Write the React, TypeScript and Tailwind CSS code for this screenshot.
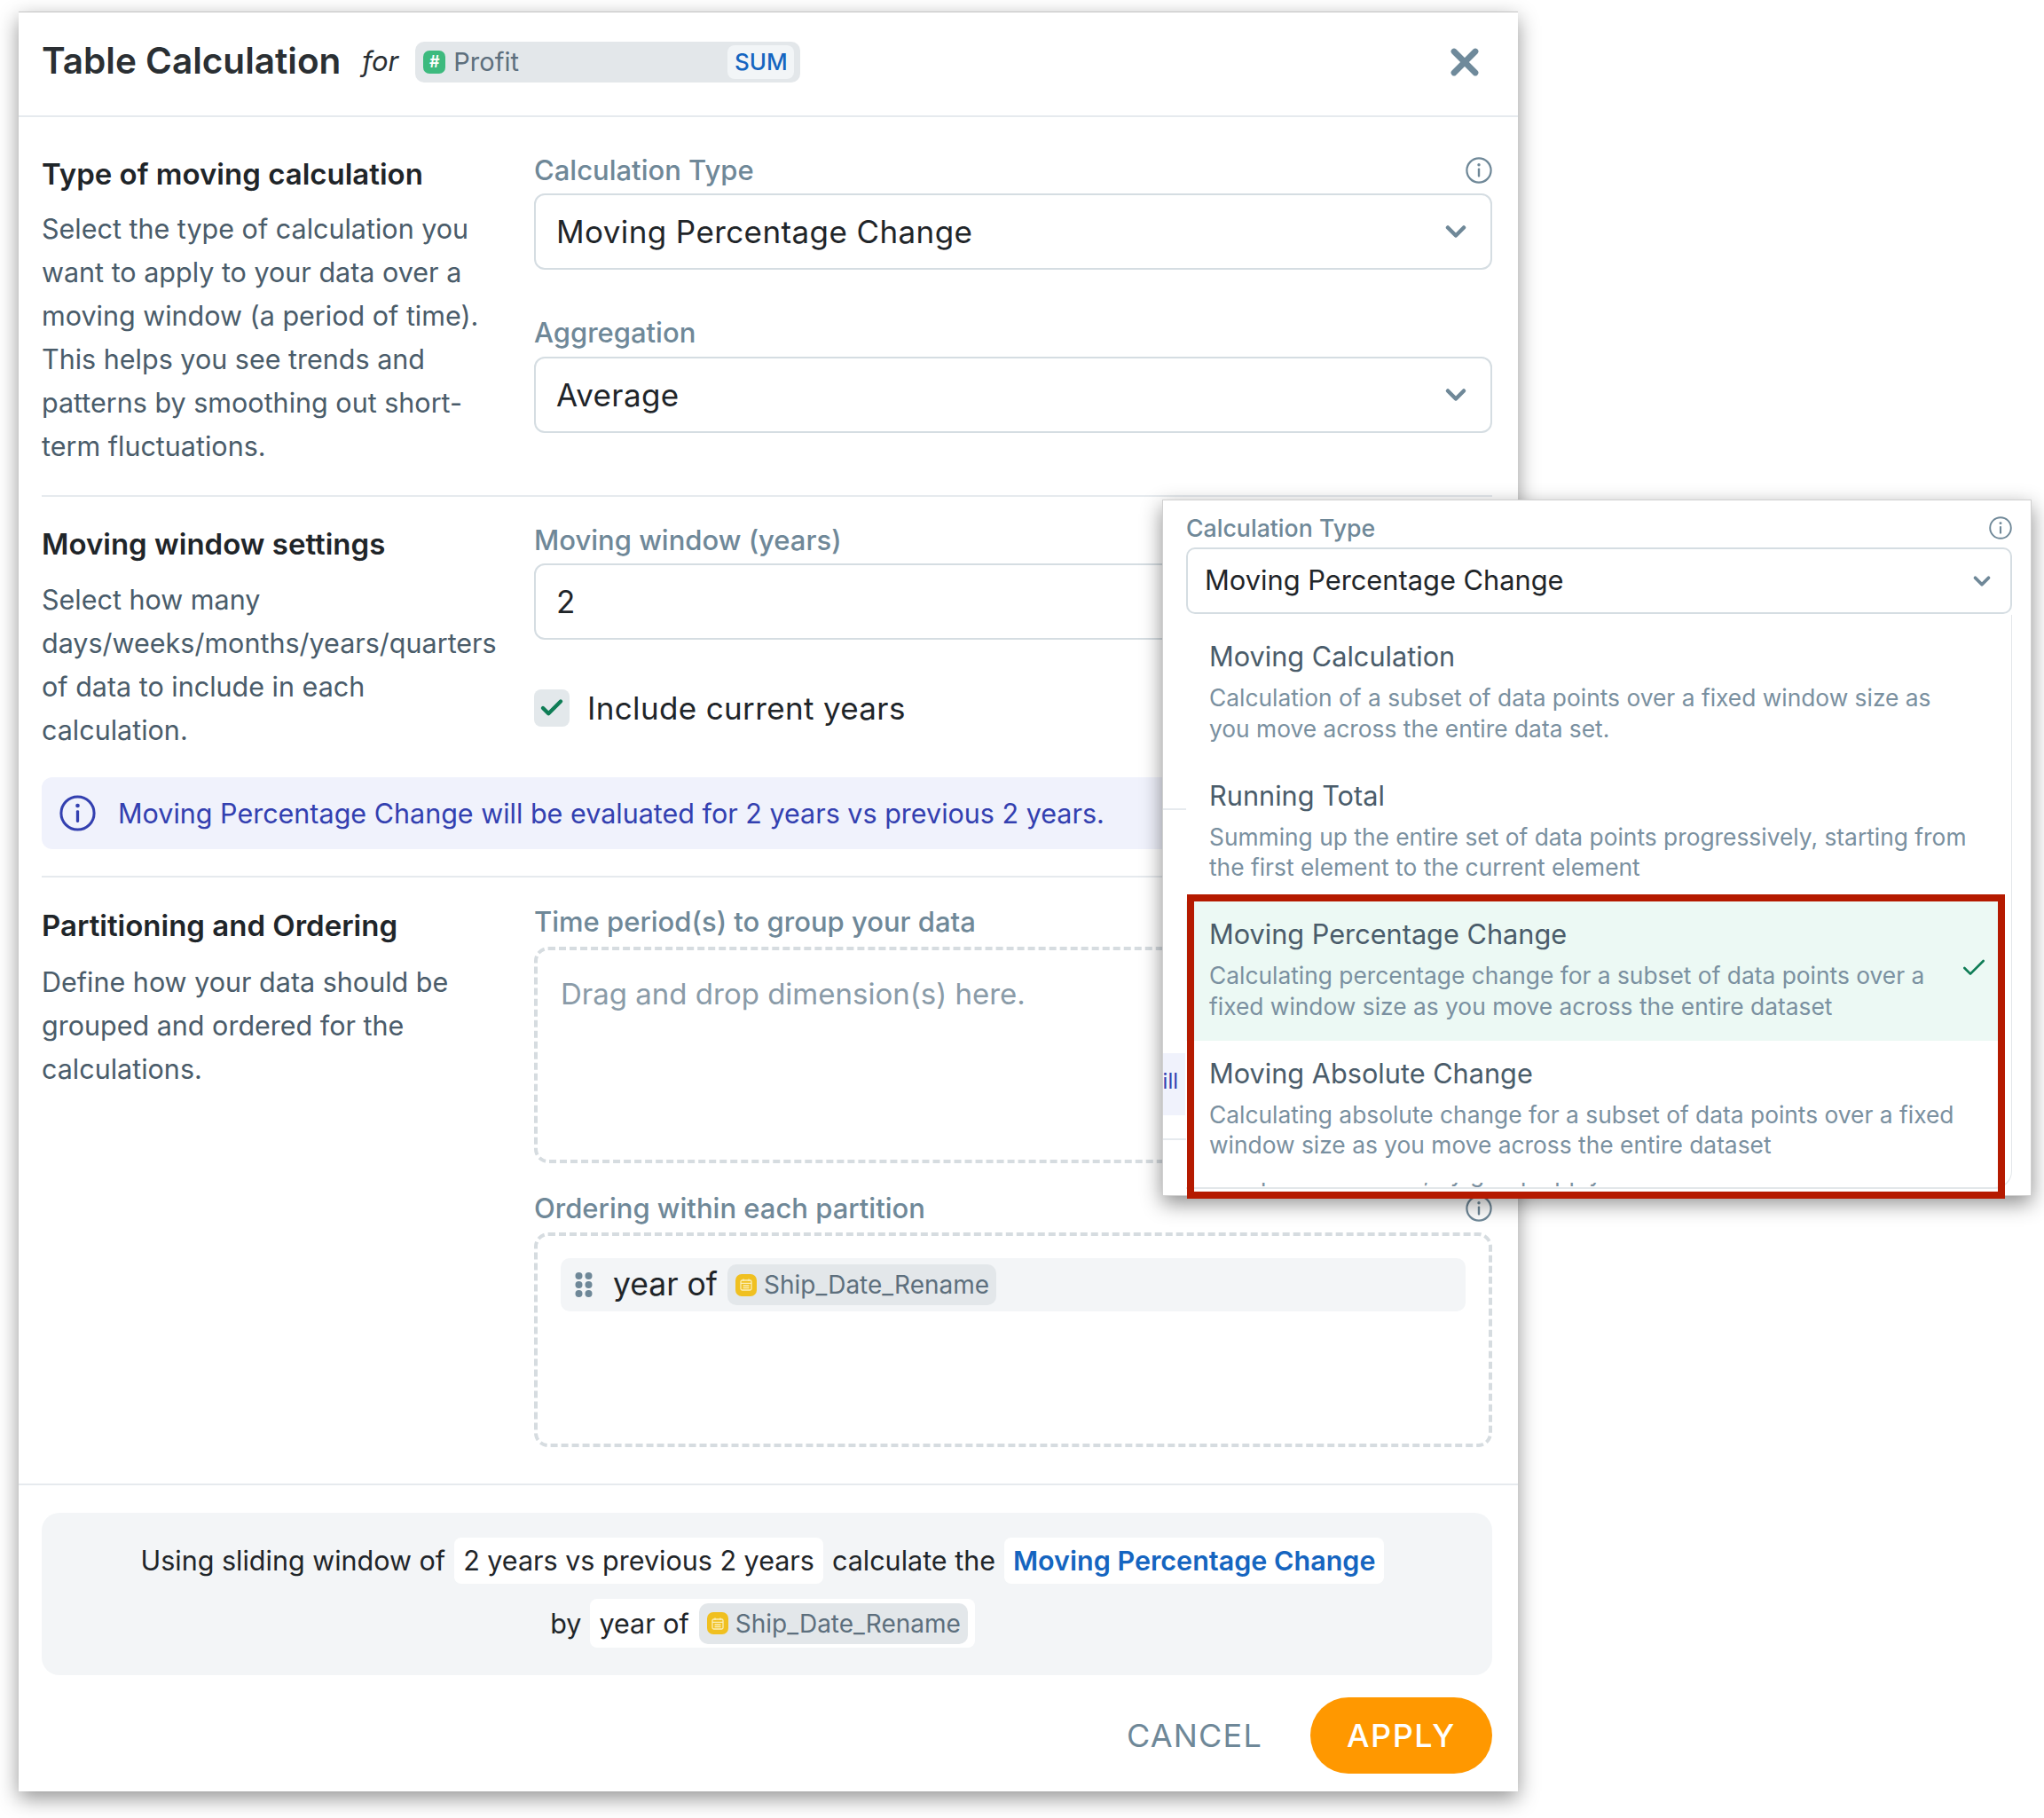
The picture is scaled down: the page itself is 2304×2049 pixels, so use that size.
import React from 'react';
import { ChevronDown, X, Check } from 'lucide-react';

function InfoIcon({ className }: { className?: string }) {
  return (
    <svg viewBox="0 0 30 30" fill="none" className={className}>
      <circle cx="15" cy="15" r="13.6" stroke="currentColor" strokeWidth="2.2" />
      <circle cx="15" cy="8.8" r="1.7" fill="currentColor" />
      <rect x="13.8" y="12.6" width="2.4" height="10" rx="1" fill="currentColor" />
    </svg>
  );
}

function CalendarBadge() {
  return (
    <span className="w-[24px] h-[25px] rounded-[7px] bg-[#f0c020] flex items-center justify-center shrink-0">
      <svg viewBox="0 0 16 16" className="w-[16px] h-[16px]" fill="none" stroke="#fbeeb8" strokeWidth="1.3">
        <rect x="2" y="3" width="12" height="11" rx="1.5" />
        <path d="M2 6.4h12M5 1.5v2.5M11 1.5v2.5M4.5 9h7M4.5 11.5h7" />
      </svg>
    </span>
  );
}

function DateChip({ className }: { className: string }) {
  return (
    <span className={`flex items-center bg-[#e3e7ea] rounded-[10px] ${className}`}>
      <CalendarBadge />
      <span className="ml-[8px] text-[28px] text-[#5d6f7d]">Ship_Date_Rename</span>
    </span>
  );
}

function SelectBox({ value }: { value: string }) {
  return (
    <div className="h-[86px] border-2 border-[#d5dde2] rounded-[12px] flex items-center justify-between pl-[23px] pr-[21px]">
      <span className="text-[35px] tracking-[0.4px] text-[#1f2529]">{value}</span>
      <ChevronDown className="w-[36px] h-[36px] text-[#6f8898]" strokeWidth={3} />
    </div>
  );
}

function FieldLabel({ children, info }: { children: React.ReactNode; info?: boolean }) {
  return (
    <div className="h-[36px] flex items-center justify-between text-[31px] font-medium text-[#6f8898]">
      <span>{children}</span>
      {info && <InfoIcon className="w-[30px] h-[30px] text-[#6f8898]" />}
    </div>
  );
}

const options = [
  {
    title: 'Moving Calculation',
    desc: 'Calculation of a subset of data points over a fixed window size as you move across the entire data set.',
  },
  {
    title: 'Running Total',
    desc: 'Summing up the entire set of data points progressively, starting from the first element to the current element',
  },
  {
    title: 'Moving Percentage Change',
    desc: 'Calculating percentage change for a subset of data points over a fixed window size as you move across the entire dataset',
    active: true,
  },
  {
    title: 'Moving Absolute Change',
    desc: 'Calculating absolute change for a subset of data points over a fixed window size as you move across the entire dataset',
  },
];

export default function App() {
  return (
    <div className="relative w-[2304px] h-[2049px] overflow-hidden bg-white font-['Inter',sans-serif]">
      {/* Dialog */}
      <div className="absolute left-[21px] top-[13px] w-[1690px] h-[2006px] flex flex-col bg-white border-t border-[#c4c4c4] shadow-[0_8px_22px_rgba(0,0,0,0.42)]">
        <header className="h-[118px] shrink-0 border-b-2 border-[#e6eaee] flex items-center pl-[26px] pr-[36px] pb-[5px]">
          <h1 className="text-[40.5px] font-semibold text-[#2a2f33]">Table Calculation</h1>
          <span className="ml-[24px] text-[31px] italic text-[#2a2f33]">for</span>
          <div className="ml-[19px] w-[434px] h-[46px] bg-[#e3e7ea] rounded-[10px] flex items-center pl-[9px] pr-[7px]">
            <span className="w-[25px] h-[26px] rounded-[7px] bg-[#3dba7e] text-white text-[18px] font-semibold flex items-center justify-center">#</span>
            <span className="ml-[9px] text-[29px] text-[#5d6f7d]">Profit</span>
            <span className="ml-auto w-[75px] h-[38px] bg-[#f2f5f7] rounded-[8px] flex items-center justify-center text-[26px] font-medium text-[#1565c0]">SUM</span>
          </div>
          <X className="ml-auto w-[48px] h-[48px] text-[#6f8a9b]" strokeWidth={3.4} />
        </header>

        <div className="flex-1 pl-[26px] pr-[29px] flex flex-col">
          {/* Type of moving calculation */}
          <section className="h-[428px] shrink-0 grid grid-cols-[555px_1fr] pt-[42px] border-b-2 border-[#e6eaee]">
            <div>
              <h2 className="text-[33px] leading-[44px] font-semibold text-[#1f2529]">Type of moving calculation</h2>
              <p className="mt-[15px] text-[30.5px] leading-[49.1px] text-[#4a5c6a] w-[525px]">
                Select the type of calculation you want to apply to your data over a moving window (a period of time). This helps you see trends and patterns by smoothing out short-term fluctuations.
              </p>
            </div>
            <div>
              <FieldLabel info>Calculation Type</FieldLabel>
              <div className="mt-[8px]"><SelectBox value="Moving Percentage Change" /></div>
              <div className="mt-[53px]"><FieldLabel>Aggregation</FieldLabel></div>
              <div className="mt-[9px]"><SelectBox value="Average" /></div>
            </div>
          </section>

          {/* Moving window settings */}
          <section className="shrink-0 grid grid-cols-[555px_1fr] pt-[31px]">
            <div>
              <h2 className="text-[33px] leading-[44px] font-semibold text-[#1f2529]">Moving window settings</h2>
              <p className="mt-[16px] text-[30.5px] leading-[49px] text-[#4a5c6a] w-[525px]">
                Select how many days/weeks/months/years/quarters of data to include in each calculation.
              </p>
            </div>
            <div>
              <FieldLabel>Moving window (years)</FieldLabel>
              <div className="mt-[8px] h-[86px] border-2 border-[#d5dde2] rounded-[12px] flex items-center pl-[23px] text-[35px] text-[#1f2529]">2</div>
              <div className="mt-[51px] flex items-center">
                <span className="w-[40px] h-[42px] bg-[#e3e8eb] rounded-[8px] flex items-center justify-center">
                  <Check className="w-[30px] h-[30px] text-[#0f7d56]" strokeWidth={3.5} />
                </span>
                <span className="ml-[20px] text-[35px] tracking-[0.35px] text-[#1f2529]">Include current years</span>
              </div>
            </div>
          </section>

          <div className="mt-[29px] h-[81px] shrink-0 bg-[#f0f2fc] rounded-[12px] flex items-center pl-[20px] text-[#3340b0]">
            <InfoIcon className="w-[41px] h-[41px]" />
            <span className="ml-[25px] text-[30.5px]">Moving Percentage Change will be evaluated for 2 years vs previous 2 years.</span>
          </div>

          {/* Partitioning and Ordering */}
          <section className="mt-[30px] flex-1 grid grid-cols-[555px_1fr] pt-[32px] border-t-2 border-[#e6eaee]">
            <div>
              <h2 className="text-[33px] leading-[44px] font-semibold text-[#1f2529]">Partitioning and Ordering</h2>
              <p className="mt-[17px] text-[30.5px] leading-[49px] text-[#4a5c6a] w-[525px]">
                Define how your data should be grouped and ordered for the calculations.
              </p>
            </div>
            <div>
              <FieldLabel info>Time period(s) to group your data</FieldLabel>
              <div className="mt-[10px] h-[244px] border-[4px] border-dashed border-[#d6dce0] rounded-[16px] pl-[26px] pt-[25px] text-[33px] text-[#8a9ba8]">
                Drag and drop dimension(s) here.
              </div>
              <div className="mt-[33px]"><FieldLabel info>Ordering within each partition</FieldLabel></div>
              <div className="mt-[9px] h-[242px] border-[4px] border-dashed border-[#d6dce0] rounded-[16px] pl-[26px] pr-[26px] pt-[25px]">
                <div className="h-[60px] bg-[#f3f5f7] rounded-[10px] flex items-center pl-[16px]">
                  <svg viewBox="0 0 20 30" className="w-[20px] h-[30px]" fill="#6f8898">
                    <circle cx="4.5" cy="5" r="4" /><circle cx="15.5" cy="5" r="4" />
                    <circle cx="4.5" cy="15" r="4" /><circle cx="15.5" cy="15" r="4" />
                    <circle cx="4.5" cy="25" r="4" /><circle cx="15.5" cy="25" r="4" />
                  </svg>
                  <span className="ml-[23px] text-[35.5px] text-[#1f2529]">year of</span>
                  <DateChip className="ml-[11px] h-[46px] w-[303px] pl-[9px]" />
                </div>
              </div>
            </div>
          </section>
        </div>

        {/* Summary and buttons */}
        <footer className="h-[347px] shrink-0 border-t-2 border-[#e6eaee] pl-[26px] pr-[29px] pt-[31px]">
          <div className="h-[183px] bg-[#f3f5f7] rounded-[20px] flex flex-col items-center pt-[28px] pr-[10px] text-[30.5px] text-[#1f2529]">
            <div className="flex items-center h-[52px]">
              <span>Using sliding window of</span>
              <span className="ml-[10px] h-[52px] px-[10px] bg-white rounded-[8px] flex items-center">2 years vs previous 2 years</span>
              <span className="ml-[10px]">calculate the</span>
              <span className="ml-[10px] h-[52px] px-[10px] bg-white rounded-[8px] flex items-center font-semibold text-[#1565c0]">Moving Percentage Change</span>
            </div>
            <div className="mt-[17px] flex items-center h-[55px]">
              <span>by</span>
              <span className="ml-[10px] h-[55px] pl-[10px] pr-[8px] bg-white rounded-[8px] flex items-center">
                year of
                <DateChip className="ml-[11px] h-[46px] pl-[9px] pr-[8px]" />
              </span>
            </div>
          </div>
          <div className="mt-[25px] flex items-center justify-end">
            <span className="text-[36px] tracking-[1.2px] text-[#6f8898]">CANCEL</span>
            <span className="ml-[54px] w-[205px] h-[86px] rounded-full bg-[#ff9800] flex items-center justify-center text-[36px] font-medium tracking-[1.5px] text-white">APPLY</span>
          </div>
        </footer>
      </div>

      {/* Calculation type dropdown, shown open */}
      <div className="absolute left-[1310px] top-[563px] w-[980px] h-[785px] bg-white border border-[#d0d0d0] overflow-hidden shadow-[0_8px_22px_rgba(0,0,0,0.45)] pl-[26px] pr-[21px] pt-[13px]">
        <div className="absolute left-0 top-[347px] w-[26px] h-[2px] bg-[#e6eaee]" />
        <div className="absolute left-0 top-[623px] w-[25px] h-[70px] bg-[#f0f2fc]" />
        <span className="absolute left-0 top-[640px] w-[17px] overflow-hidden flex justify-end text-[24px] leading-[30px] text-[#3340b0]">ill</span>
        <div className="absolute left-0 top-[719px] w-[26px] h-[2px] bg-[#e6eaee]" />

        <div className="h-[36px] flex items-center justify-between text-[26.7px] font-medium text-[#6f8898]">
          <span>Calculation Type</span>
          <InfoIcon className="w-[26px] h-[26px]" />
        </div>
        <div className="mt-[4px] h-[75px] border-2 border-[#d5dde2] rounded-[10px] flex items-center justify-between pl-[19px] pr-[17px]">
          <span className="text-[30.8px] text-[#1f2529]">Moving Percentage Change</span>
          <ChevronDown className="w-[30px] h-[30px] text-[#6f8898]" strokeWidth={3} />
        </div>
        <div className="relative mt-[1px] h-[647px] pt-[10px] overflow-hidden border-r border-b-2 border-[#e3e7ea] rounded-br-[20px]">
          {options.map((o) => (
            <div key={o.title} className={`relative h-[156.5px] pl-[26px] pt-[16px] ${o.active ? 'bg-[#ecf9f4] mr-[14px]' : ''}`}>
              <div className="text-[30.7px] leading-[42px] text-[#4a5c6a]">{o.title}</div>
              <div className="mt-[8px] w-[860px] text-[26.35px] leading-[34.5px] text-[#7a90a0]">{o.desc}</div>
              {o.active && <Check className="absolute right-[12px] top-[59px] w-[32px] h-[32px] text-[#0f7d56]" strokeWidth={2} />}
            </div>
          ))}
          <div className="absolute left-[26px] bottom-0 h-[5px] overflow-hidden">
            <div className="-mt-[28px] text-[26.35px] leading-[34.5px] text-[#7a90a0] whitespace-nowrap">Compares a subset, by group apply</div>
          </div>
        </div>
      </div>

      {/* Red highlight */}
      <div className="absolute left-[1338px] top-[1008px] w-[922px] h-[343px] border-[8px] border-[#b51a00]" />
    </div>
  );
}
